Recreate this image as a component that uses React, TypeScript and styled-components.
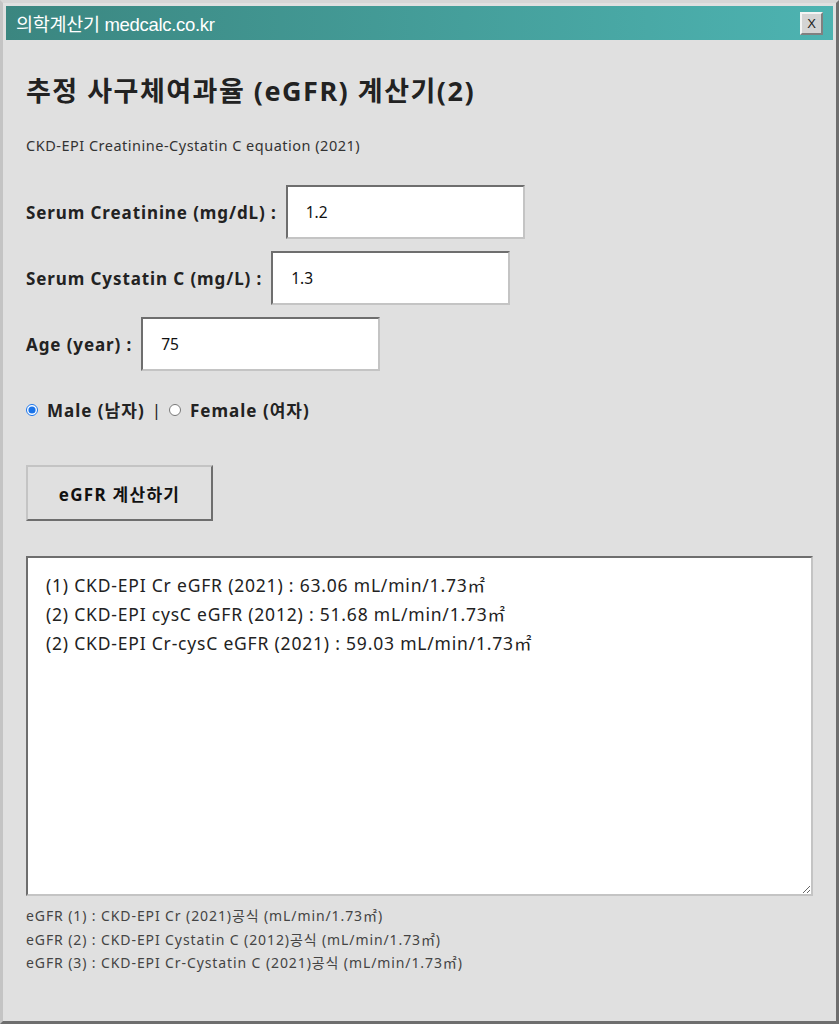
import styled, { createGlobalStyle } from "styled-components";

const GlobalStyle = createGlobalStyle`
  html, body {
    margin: 0;
    padding: 0;
    background: #e0e0e0;
  }
  * {
    box-sizing: border-box;
  }
`;

const FONT = `"Noto Sans", "Noto Sans CJK KR", sans-serif`;

const results = [
  "(1) CKD-EPI Cr eGFR (2021) : 63.06 mL/min/1.73㎡",
  "(2) CKD-EPI cysC eGFR (2012) : 51.68 mL/min/1.73㎡",
  "(2) CKD-EPI Cr-cysC eGFR (2021) : 59.03 mL/min/1.73㎡",
];

const notes = [
  "eGFR (1) : CKD-EPI Cr (2021)공식 (mL/min/1.73㎡)",
  "eGFR (2) : CKD-EPI Cystatin C (2012)공식 (mL/min/1.73㎡)",
  "eGFR (3) : CKD-EPI Cr-Cystatin C (2021)공식 (mL/min/1.73㎡)",
];

const fields = [
  { label: "Serum Creatinine (mg/dL) :", value: "1.2" },
  { label: "Serum Cystatin C (mg/L) :", value: "1.3" },
  { label: "Age (year) :", value: "75" },
];

export default function App() {
  return (
    <>
      <GlobalStyle />
      <Frame>
        <TitleBar>
          <TitleText>의학계산기 medcalc.co.kr</TitleText>
          <CloseButton>X</CloseButton>
        </TitleBar>
        <Content>
          <Heading>추정 사구체여과율 (eGFR) 계산기(2)</Heading>
          <Subtitle>CKD-EPI Creatinine-Cystatin C equation (2021)</Subtitle>
          {fields.map((f) => (
            <FieldRow key={f.label}>
              <Label>{f.label}</Label>
              <Input defaultValue={f.value} />
            </FieldRow>
          ))}
          <RadioRow>
            <Radio type="radio" name="sex" defaultChecked />
            <span>Male (남자)</span>
            <Sep>|</Sep>
            <Radio type="radio" name="sex" />
            <span>Female (여자)</span>
          </RadioRow>
          <CalcButton>eGFR 계산하기</CalcButton>
          <ResultBox readOnly value={results.join("\n")} />
          <Notes>
            {notes.map((n) => (
              <div key={n}>{n}</div>
            ))}
          </Notes>
        </Content>
      </Frame>
    </>
  );
}

const Frame = styled.div`
  width: 839px;
  height: 1024px;
  padding: 3px;
  background: #e0e0e0;
  border-top: 3px solid #d6d6d6;
  border-left: 3px solid #c4c4c4;
  border-right: 3px solid #6e6e6e;
  border-bottom: 3px solid #6e6e6e;
  display: flex;
  flex-direction: column;
`;

const TitleBar = styled.div`
  height: 34px;
  display: flex;
  align-items: center;
  justify-content: space-between;
  padding: 0 10px 0 10px;
  background: linear-gradient(to right, #3b8680, #4db3b1);
`;

const TitleText = styled.span`
  color: #ffffff;
  font-family: "Liberation Sans", "Noto Sans CJK KR", sans-serif;
  font-size: 18.5px;
  letter-spacing: -0.3px;
`;

const CloseButton = styled.div`
  width: 23px;
  height: 23px;
  display: flex;
  align-items: center;
  justify-content: center;
  background: #d4d4d4;
  border-top: 2px solid #f4f4f4;
  border-left: 2px solid #f4f4f4;
  border-right: 2px solid #808080;
  border-bottom: 2px solid #808080;
  font-family: "Liberation Sans", sans-serif;
  font-size: 13px;
  color: #222;
`;

const Content = styled.div`
  padding: 0 20px;
  font-family: ${FONT};
  color: #222;
`;

const Heading = styled.h1`
  margin: 34px 0 0;
  font-size: 27px;
  font-weight: 700;
  line-height: 34px;
  letter-spacing: 1.5px;
`;

const Subtitle = styled.p`
  margin: 27px 0 0;
  font-size: 14.5px;
  line-height: 20px;
  letter-spacing: 0.5px;
  color: #333;
`;

const FieldRow = styled.div`
  display: flex;
  align-items: center;
  gap: 9px;
  margin-top: 12px;
  &:first-of-type {
    margin-top: 30px;
  }
`;

const Label = styled.label`
  font-size: 17px;
  font-weight: 700;
  letter-spacing: 0.9px;
`;

const Input = styled.input`
  width: 239px;
  height: 54px;
  padding: 0 18px;
  background: #fff;
  border-top: 2px solid #6e6e6e;
  border-left: 2px solid #6e6e6e;
  border-right: 2px solid #c4c4c4;
  border-bottom: 2px solid #c4c4c4;
  font-family: ${FONT};
  font-size: 15.5px;
  color: #111;
  outline: none;
`;

const RadioRow = styled.div`
  display: flex;
  align-items: center;
  gap: 5px;
  margin-top: 26px;
  font-size: 17px;
  font-weight: 700;
  letter-spacing: 1px;
`;

const Radio = styled.input`
  width: 12px;
  height: 12px;
  margin: 0 4px 0 0;
  accent-color: #1a73e8;
`;

const Sep = styled.span`
  font-weight: 400;
  margin: 0 2px;
`;

const CalcButton = styled.button`
  display: block;
  margin-top: 43px;
  width: 187px;
  height: 56px;
  background: #e0e0e0;
  border-top: 2px solid #c4c4c4;
  border-left: 2px solid #c4c4c4;
  border-right: 2px solid #6e6e6e;
  border-bottom: 2px solid #6e6e6e;
  font-family: ${FONT};
  font-size: 17px;
  font-weight: 700;
  letter-spacing: 1.3px;
  color: #111;
`;

const ResultBox = styled.textarea`
  display: block;
  margin-top: 35px;
  width: 100%;
  height: 340px;
  padding: 13px 18px;
  background: #fff;
  border-top: 2px solid #6e6e6e;
  border-left: 2px solid #6e6e6e;
  border-right: 2px solid #c4c4c4;
  border-bottom: 2px solid #c4c4c4;
  font-family: ${FONT};
  font-size: 17.5px;
  line-height: 29px;
  letter-spacing: 0.8px;
  color: #222;
  outline: none;
  resize: both;
`;

const Notes = styled.div`
  margin-top: 8px;
  font-size: 14px;
  line-height: 23.5px;
  letter-spacing: 0.9px;
  color: #444;
`;
